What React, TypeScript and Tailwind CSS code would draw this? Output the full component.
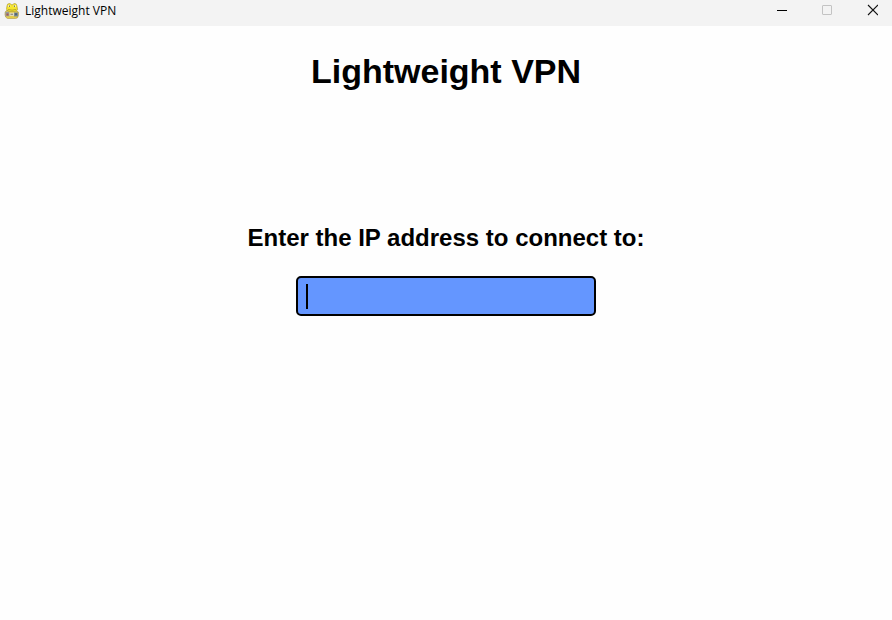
function SnakeIcon() {
  return (
    <svg className="h-4 w-4 shrink-0" viewBox="0 0 16 16" aria-hidden="true">
      <path d="M2.500 7.500Q.7 8.500 1 11.500Q1 14.500 3.500 15.600H11.500Q14.200 15.300 14.400 12.500V9L12 7.500Z" fill="#e3cc4a" stroke="#a8923c" strokeWidth=".6" />
      <path d="M1.500 8.700h3l1 1.300v3.300h-4z" fill="#969a9c" />
      <path d="M10 9.500h4v4h-4z" fill="#7d8b94" />
      <path d="M2.500 10.500h2v2h-2z" fill="#a9594a" />
      <path d="M11 10.200h2v2h-2z" fill="#52646f" />
      <path d="M5.500 9.700h4.500v3.200H5.500z" fill="#e2dcc0" />
      <path d="M6.500 10.700h2.500v1.200H6.500z" fill="#8f8d7c" />
      <path d="M3 3Q3 .6 5.200 .5Q6.800 .5 7.300 1.700H8.700Q9.300 .5 10.800 .5Q12.800 .7 12.900 2.800L13.300 5Q14.300 7.700 10.800 8.300H5.500Q2 7.700 2.700 5Z" fill="#f6e62c" stroke="#a28f28" strokeWidth=".6" />
      <path d="M4.200 2h2v2h-2zM9.700 2h2v2h-2z" fill="#fffbd2" />
      <path d="M4.900 2.400h1.100v1.300H4.900zM9.900 2.400H11v1.300H9.900z" fill="#625b2a" />
      <path d="M4 6.400Q8 7.900 12.300 6.300" fill="none" stroke="#a28f28" strokeWidth=".7" />
    </svg>
  );
}

function TitleBar() {
  return (
    <header className="flex h-[26px] items-start justify-between bg-[#f3f3f3] text-black">
      <div className="flex h-[22px] items-center gap-[5px] pl-1">
        <SnakeIcon />
        <span className="font-['Open_Sans','Noto_Sans',sans-serif] text-xs leading-4">Lightweight VPN</span>
      </div>
      <div className="flex h-5 gap-[9px] pr-0.5">
        <button type="button" aria-label="Minimize" className="grid w-9 place-items-center">
          <svg width="10" height="10" viewBox="0 0 10 10" shapeRendering="crispEdges">
            <path d="M0 5h10v1H0z" fill="#000" />
          </svg>
        </button>
        <button type="button" aria-label="Maximize" disabled className="grid w-9 place-items-center">
          <svg width="10" height="10" viewBox="0 0 10 10">
            <rect x=".5" y=".5" width="9" height="9" rx=".5" fill="none" stroke="#c3c3c3" />
          </svg>
        </button>
        <button type="button" aria-label="Close" className="grid w-9 place-items-center">
          <svg width="12" height="12" viewBox="0 0 12 12">
            <path d="M2 1l10 10M12 1L2 11" stroke="#111" strokeWidth="1.1" />
          </svg>
        </button>
      </div>
    </header>
  );
}

export default function App() {
  return (
    <div className="min-h-screen bg-[#fefefe] font-['Liberation_Sans',Arial,sans-serif] text-black">
      <TitleBar />
      <main className="flex flex-col items-center pt-6">
        <h1 className="text-[34px] leading-[42px] font-bold">Lightweight VPN</h1>
        <label htmlFor="ip-address" className="mt-[130px] text-2xl leading-8 font-bold">
          Enter the IP address to connect to:
        </label>
        <div className="relative mt-[22px] w-[300px] max-w-full">
          <input
            id="ip-address"
            type="text"
            className="block h-10 w-full rounded-[5px] border-2 border-black bg-[#6496ff] px-2 text-2xl caret-transparent outline-none"
          />
          <span aria-hidden="true" className="pointer-events-none absolute top-2 left-[10px] h-[25px] w-0.5 bg-black" />
        </div>
      </main>
    </div>
  );
}
